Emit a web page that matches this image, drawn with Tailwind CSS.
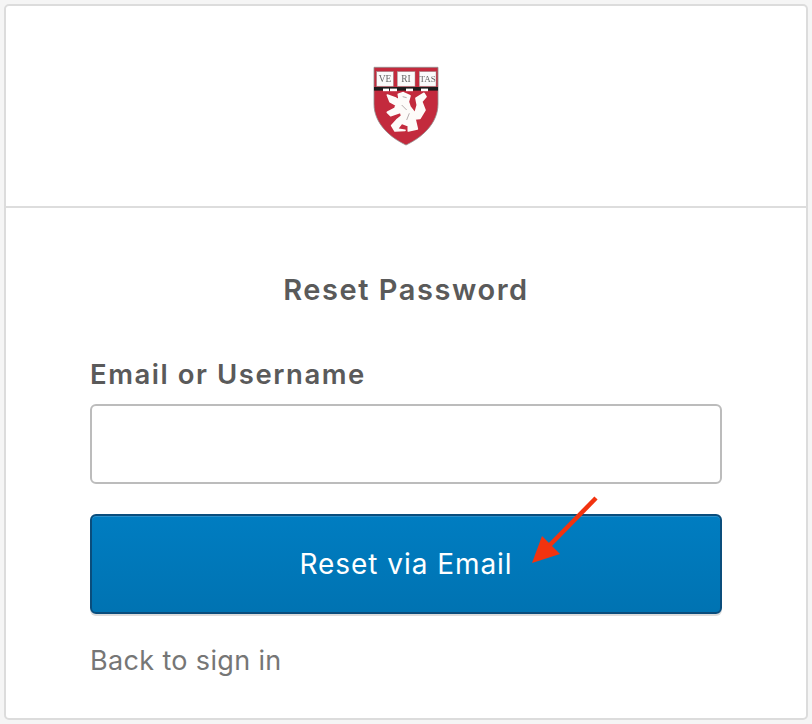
<!DOCTYPE html>
<html lang="en">
<head>
<meta charset="utf-8">
<title>Reset Password</title>
<script src="https://cdn.jsdelivr.net/npm/@tailwindcss/browser@4"></script>
</head>
<body class="bg-[#f5f5f5] font-['Inter',sans-serif]">
  <div class="w-[812px] h-[724px] overflow-hidden pt-[4px] px-[4px] relative">
    <div class="w-[804px] h-[716px] bg-white border-2 border-[#dcdcdc] rounded-[5px] flex flex-col">

      <!-- Logo header -->
      <div class="h-[202px] shrink-0 border-b-2 border-[#dddddd] flex justify-center pt-[60px]">
        <svg class="w-[66px] h-[80px] blur-[0.5px]" viewBox="0 0 66 80">
          <path d="M1 1.3H65V38C65 58 48 72 33 79C18 72 1 58 1 38Z" fill="#c32a3d" stroke="#8f8f8f" stroke-width="0.8"/>
          <rect x="3.7" y="5.7" width="16.6" height="14.5" fill="#fbfbfb" stroke="#999" stroke-width="0.5"/>
          <rect x="24.3" y="5.7" width="17.7" height="14.5" fill="#fbfbfb" stroke="#999" stroke-width="0.5"/>
          <rect x="46.3" y="5.7" width="16.7" height="14.5" fill="#fbfbfb" stroke="#999" stroke-width="0.5"/>
          <text x="12" y="16" text-anchor="middle" font-family="Liberation Serif" font-size="9.5" fill="#666">VE</text>
          <text x="33" y="16" text-anchor="middle" font-family="Liberation Serif" font-size="9.5" fill="#666">RI</text>
          <text x="54.6" y="16" text-anchor="middle" font-family="Liberation Serif" font-size="9" fill="#666">TAS</text>
          <rect x="1" y="21" width="64" height="3.6" fill="#1c1c1c"/>
          <rect x="10" y="22.6" width="6" height="2.6" fill="#fff"/>
          <rect x="17" y="22.6" width="7" height="2.6" fill="#fff"/>
          <rect x="33" y="22.6" width="7" height="2.6" fill="#fff"/>
          <rect x="48" y="22.6" width="7" height="2.6" fill="#fff"/>
          <g transform="translate(-13,-11) scale(0.3333)">
            <path d="M82 120L105 128L118 136L115 118L130 113L150 122L145 140L150 155L165 175L172 150L168 130L192 115L198 125L185 140L195 165L180 190L165 192L172 222L145 228L145 212L125 205L112 222L135 226L105 228L95 212L110 195L125 183L122 172L92 182L82 172L105 160L108 150L90 140Z" fill="#fdfbf9" stroke="#fdfbf9" stroke-width="5" stroke-linejoin="round"/>
            <path d="M128 125L140 128M125 150L140 165M148 175L140 195" stroke="#b5adad" stroke-width="3" fill="none"/>
          </g>
        </svg>
      </div>

      <!-- Form -->
      <div class="flex-1 px-[84px] flex flex-col">
        <h1 class="text-center text-[29px] leading-[34px] font-semibold text-[#5a5a5a] mt-[65px] tracking-[1.55px]">Reset Password</h1>

        <label class="block text-[27.5px] leading-[32px] font-semibold text-[#5a5a5a] mt-[51px] tracking-[1.55px]">Email or Username</label>
        <input type="text" class="block w-full h-[80px] mt-[14px] bg-white border-2 border-[#bcbcbc] rounded-[6px]">

        <button class="relative block w-full h-[100px] mt-[30px] rounded-[6px] border-2 border-[#0a4d7c] bg-linear-to-b from-[#007dc1] to-[#0073b2] shadow-[inset_0_1px_0_#2a8fca,0_2px_0_#dcdcdc] text-white text-[28px] tracking-[0.95px]">
          Reset via Email
        </button>

        <a href="#" class="block mt-[31px] text-[27px] leading-[32px] tracking-[0.35px] text-[#767676]">Back to sign in</a>
      </div>
    </div>

    <!-- Annotation arrow -->
    <svg class="absolute left-[525px] top-[490px] w-[80px] h-[80px]" viewBox="0 0 80 80">
      <path d="M71 8L20 60" stroke="#f2330f" stroke-width="4.5" fill="none"/>
      <path d="M7 73L17 46L35 64Z" fill="#f2330f"/>
    </svg>
  </div>
</body>
</html>
